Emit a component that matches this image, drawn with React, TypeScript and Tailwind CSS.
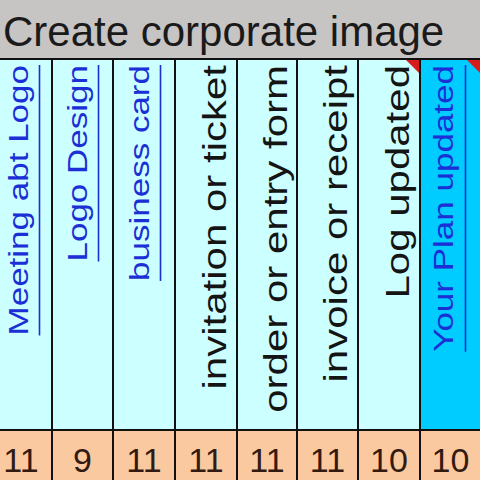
import React from 'react';

type Task = { label: string; link: boolean; count: number; w: string; pad: string; bg: string; note?: boolean };

const tasks: Task[] = [
    { label: 'Meeting abt Logo', link: true, count: 11, w: 'w-[62px]', pad: 'pl-[9px]', bg: 'bg-[#ccffff]' },
    { label: 'Logo Design', link: true, count: 9, w: 'w-[61px]', pad: 'pl-[6px]', bg: 'bg-[#ccffff]' },
    { label: 'business card', link: true, count: 11, w: 'w-[62px]', pad: 'pl-[7px]', bg: 'bg-[#ccffff]' },
    { label: 'invitation or ticket', link: false, count: 11, w: 'w-[62px]', pad: 'pl-[18px]', bg: 'bg-[#ccffff]' },
    { label: 'order or entry form', link: false, count: 11, w: 'w-[60px]', pad: 'pl-[17px]', bg: 'bg-[#ccffff]' },
    { label: 'invoice or receipt', link: false, count: 11, w: 'w-[61px]', pad: 'pl-[17px]', bg: 'bg-[#ccffff]' },
    { label: 'Log updated', link: false, count: 10, w: 'w-[62px]', pad: 'pl-[18px]', bg: 'bg-[#ccffff]', note: true },
    { label: 'Your Plan updated', link: true, count: 10, w: 'w-[61px]', pad: 'pl-[5px]', bg: 'bg-[#00ccff]', note: true },
];

const CommentMark = () => (
    <span className="absolute top-0 right-0 w-0 h-0 border-l-[13px] border-l-transparent border-t-[13px] border-t-[#d81c1c]" />
);

const App: React.FC = () => {
    return (
        <div className="w-[480px] h-[480px] overflow-hidden bg-white font-['Liberation_Sans',Arial,sans-serif]">
            <div className="h-[60px] bg-[#c7c4c4] border-b-2 border-[#111] pl-[3px] pt-[11px]">
                <h1 className="text-[42px] leading-none text-[#1a1a1a] whitespace-nowrap">Create corporate image</h1>
            </div>
            <div className="flex ml-[-9px]">
                {tasks.map(t => (
                    <div key={t.label} className={`${t.w} shrink-0 flex flex-col border-r-2 border-[#111]`}>
                        <div className={`relative h-[371px] ${t.bg} border-b-2 border-[#111] flex items-start ${t.pad} pt-[5px] overflow-hidden`}>
                            {t.note && <CommentMark />}
                            <span
                                className={`[writing-mode:vertical-rl] rotate-180 scale-x-80 leading-none whitespace-nowrap ${
                                    t.link
                                        ? 'text-[35px] text-[#1c2fd6] underline decoration-2 underline-offset-[8px]'
                                        : 'text-[42px] text-[#141414]'
                                }`}
                            >
                                {t.label}
                            </span>
                        </div>
                        <div className="h-[60px] bg-[#fbc9a0] pt-[12px] text-center text-[34px] leading-none text-[#321a10]">
                            {t.count}
                        </div>
                    </div>
                ))}
            </div>
        </div>
    );
};

export default App;
